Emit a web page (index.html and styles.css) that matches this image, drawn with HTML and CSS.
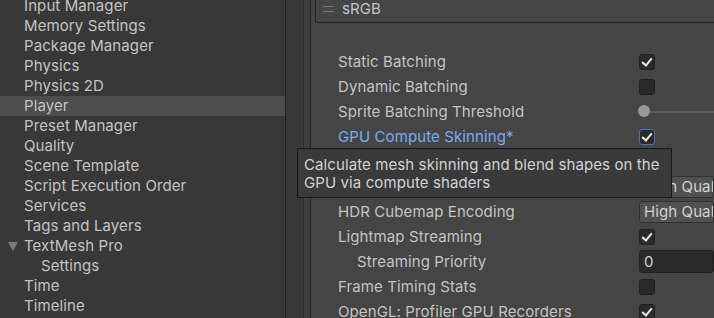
FILE: index.html
```html
<!DOCTYPE html>
<html lang="en">
<head>
  <meta charset="UTF-8" />
  <title>Project Settings - Player</title>
  <link rel="stylesheet" href="styles.css">
</head>
<body>
  <div class="window">
    <ul class="nav">
      <li>Input Manager</li>
      <li>Memory Settings</li>
      <li>Package Manager</li>
      <li>Physics</li>
      <li>Physics 2D</li>
      <li class="selected">Player</li>
      <li>Preset Manager</li>
      <li>Quality</li>
      <li>Scene Template</li>
      <li>Script Execution Order</li>
      <li>Services</li>
      <li>Tags and Layers</li>
      <li class="parent"><span class="arrow"></span>TextMesh Pro</li>
      <li class="child">Settings</li>
      <li>Time</li>
      <li>Timeline</li>
    </ul>

    <div class="gutter"></div>
    <div class="band"></div>

    <div class="inspector">
      <div class="list-box">
        <span class="handle"></span>
        <span>sRGB</span>
      </div>

      <div class="rows">
        <div class="row"><span class="label">Static Batching</span><span class="check on"></span></div>
        <div class="row"><span class="label">Dynamic Batching</span><span class="check"></span></div>
        <div class="row"><span class="label">Sprite Batching Threshold</span><span class="slider"><span class="knob"></span></span></div>
        <div class="row"><span class="label hover">GPU Compute Skinning*</span><span class="check on focus"></span></div>
        <div class="row"><span class="label">Graphics Jobs</span><span class="check"></span></div>
        <div class="row"><span class="label">Lightmap Encoding</span><span class="dropdown">High Quality</span></div>
        <div class="row"><span class="label">HDR Cubemap Encoding</span><span class="dropdown">High Quality</span></div>
        <div class="row"><span class="label">Lightmap Streaming</span><span class="check on"></span></div>
        <div class="row"><span class="label sub">Streaming Priority</span><span class="field">0</span></div>
        <div class="row"><span class="label">Frame Timing Stats</span><span class="check"></span></div>
        <div class="row"><span class="label">OpenGL: Profiler GPU Recorders</span><span class="check on"></span></div>
      </div>
    </div>
  </div>

  <div class="tooltip">Calculate mesh skinning and blend shapes on the GPU via compute shaders</div>
</body>
</html>
```

FILE: styles.css
```css
body { margin: 0; background: #383838; color: #c4c4c4; font-family: Inter, "Noto Sans", sans-serif; font-size: 15px; letter-spacing: 0.1px; overflow: hidden; }
.window { display: flex; height: 318px; overflow: hidden; }

.nav { list-style: none; margin: -4px 0 0; padding: 0; width: 285px; flex: none; border-right: 1px solid #232323; }
.nav li { height: 20px; line-height: 20px; padding-left: 24px; white-space: nowrap; }
.nav li.selected { background: #4d4d4d; }
.nav li.parent { display: flex; align-items: center; padding-left: 8px; }
.nav li.child { padding-left: 41px; }
.arrow { width: 0; height: 0; border-left: 5px solid transparent; border-right: 5px solid transparent; border-top: 9px solid #7a7a7a; margin-right: 6px; }

.gutter { width: 17px; flex: none; background: #383838; border-right: 1px solid #2a2a2a; }
.band { width: 6px; flex: none; background: #3e3e3e; border-right: 1px solid #262626; }

.inspector { flex: 1; background: #454545; overflow: hidden; }

.list-box { display: flex; align-items: center; gap: 8px; margin: -5px 0 0 4px; height: 27px; padding-left: 7px; border: 1px solid #262626; border-top: none; border-right: none; border-bottom-left-radius: 3px; }
.handle { width: 11px; height: 4px; border-top: 1px solid #777; border-bottom: 1px solid #777; }

.rows { margin-top: 26px; }
.row { display: flex; align-items: center; height: 25px; padding-left: 27px; white-space: nowrap; }
.label { width: 301px; flex: none; }
.label.sub { padding-left: 19px; width: 282px; }
.label.hover { color: #7babf4; }

.check { width: 14px; height: 14px; flex: none; background: #2a2a2a; border: 1px solid #202020; border-radius: 3px; position: relative; }
.check.focus { border-color: #3a79bb; }
.check.on::after { content: ""; position: absolute; left: 4px; top: 1px; width: 4px; height: 8px; border-right: 2px solid #e8e8e8; border-bottom: 2px solid #e8e8e8; transform: rotate(40deg); }

.slider { flex: 1; height: 2px; background: #5e5e5e; position: relative; }
.knob { position: absolute; left: -1px; top: -6px; width: 12px; height: 12px; border-radius: 50%; background: #999; }

.dropdown { flex: 1; height: 20px; line-height: 20px; padding-left: 4px; background: #515151; border: 1px solid #303030; border-radius: 3px; color: #d2d2d2; overflow: hidden; }
.field { flex: 1; height: 21px; line-height: 21px; padding-left: 4px; background: #2a2a2a; border: 1px solid #212121; border-radius: 3px; color: #d2d2d2; }

.tooltip { position: absolute; left: 297px; top: 148px; width: 375px; height: 50px; padding: 7px 6px 0 6px; box-sizing: border-box; line-height: 18px; background: #3a3a3a; border: 1px solid #191919; color: #d2d2d2; }
```
